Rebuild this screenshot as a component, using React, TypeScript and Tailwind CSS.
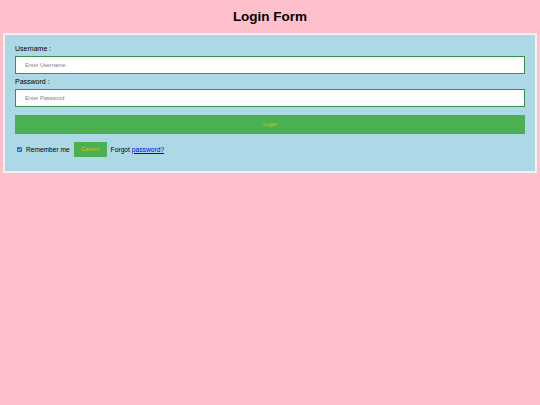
export default function App() {
  return (
    <div className="min-h-screen bg-[#ffc0cb] font-['Liberation_Sans',Arial,sans-serif] text-black">
      <h2 className="pt-[9px] text-center text-[13.5px] leading-[16px] font-bold">Login Form</h2>
      <form
        className="mx-[3px] mt-[8px] border-2 border-[#f1f1f1] bg-[#add8e6] px-[10px] pt-[10px] pb-[14px]"
        onSubmit={(e) => e.preventDefault()}
      >
        <label className="block text-[7px] leading-[8px] mb-[3px]">Username :</label>
        <input
          type="text"
          placeholder="Enter Username"
          className="block w-full h-[18px] border border-[#3b8f4f] bg-white pl-[9px] text-[5.6px] placeholder:text-[#808080] outline-none mb-[4px]"
        />
        <label className="block text-[7px] leading-[8px] mb-[3px]">Password :</label>
        <input
          type="password"
          placeholder="Enter Password"
          className="block w-full h-[18px] border border-[#3b8f4f] bg-white pl-[9px] text-[5.6px] placeholder:text-[#808080] outline-none mb-[8px]"
        />
        <button
          type="submit"
          className="block w-full h-[19px] bg-[#4caf50] text-[5.8px] text-[#d6c21a] mb-[8px]"
        >
          Login
        </button>
        <div className="flex items-center h-[15px]">
          <span className="ml-[2px] flex items-center justify-center w-[5px] h-[5px] rounded-[1px] bg-[#1a6fe0]">
            <svg viewBox="0 0 10 10" className="w-[5px] h-[5px]">
              <path d="M2 5.2 L4.2 7.3 L8 2.8" fill="none" stroke="white" strokeWidth="1.8" />
            </svg>
          </span>
          <span className="ml-[4px] text-[6.6px] leading-[8px]">Remember me</span>
          <button
            type="button"
            className="ml-[4px] w-[33px] h-[15px] bg-[#4caf50] text-[5.7px] text-[#d6c21a]"
          >
            Cancel
          </button>
          <span className="ml-[4px] text-[6.7px] leading-[8px]">
            Forgot <a href="#" className="text-[#0000ee] underline">password?</a>
          </span>
        </div>
      </form>
    </div>
  );
}
